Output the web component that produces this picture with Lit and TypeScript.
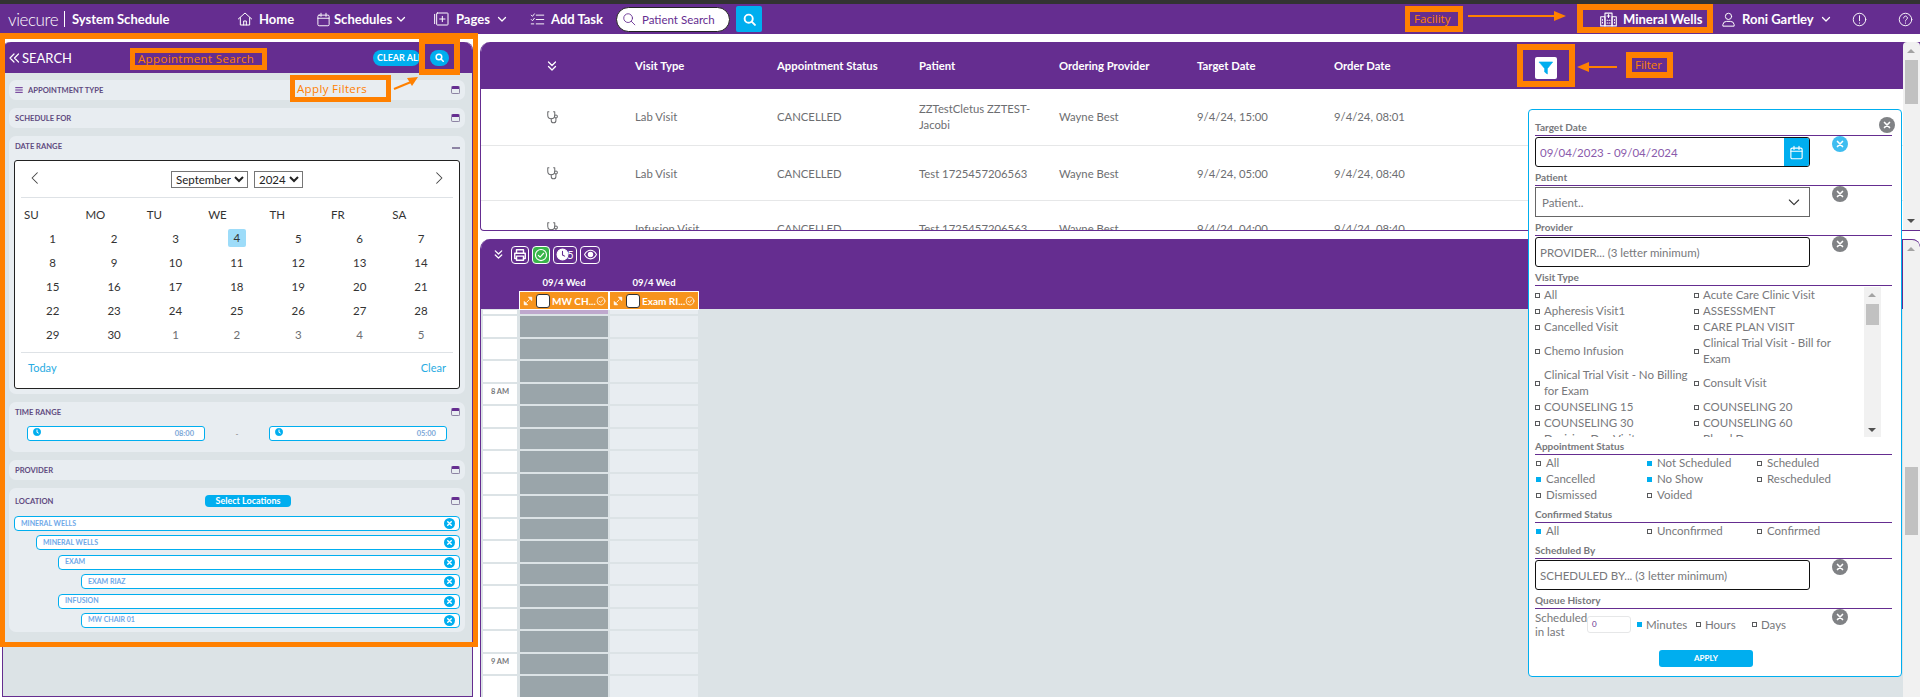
import { LitElement, html, css, svg } from "lit";
import { customElement } from "lit/decorators.js";

// small svg helper, all icons are stroke based on a 24 box
const ico = (size: number, body: unknown, sw = 1.8, color = "currentColor") => html`<svg
  width=${size} height=${size} viewBox="0 0 24 24" fill="none" stroke=${color} stroke-width=${sw}
  stroke-linecap="round" stroke-linejoin="round" style="flex:none;display:block">${body}</svg>`;

const icons = {
  home: svg`<path d="M2 12 12 3l10 9"/><path d="M5 10v11h14V10"/><path d="M10 21v-6h4v6"/>`,
  cal: svg`<rect x="3" y="5" width="18" height="17" rx="2"/><path d="M3 10h18M8 2v5M16 2v5"/>`,
  pages: svg`<rect x="4" y="3" width="17" height="18" rx="1"/><path d="M1 5v14M12.5 8v8M8.5 12h8"/>`,
  task: svg`<path d="M10 5h12M10 12h12M10 19h12M2 5l2 2 3-4M2 12l2 2 3-4M2 19h4"/>`,
  search: svg`<circle cx="10.5" cy="10.5" r="7.5"/><path d="m16 16 6 6"/>`,
  building: svg`<rect x="7" y="3" width="10" height="18"/><rect x="1" y="8" width="6" height="13"/><rect x="17" y="8" width="6" height="13"/><path d="M10 7h4M12 5v4M10 13h1M13 13h1M10 17h1M13 17h1M3.5 12v1M3.5 16v1M20.5 12v1M20.5 16v1"/>`,
  user: svg`<circle cx="12" cy="7" r="5"/><path d="M3 22v-2a6 6 0 0 1 6-5h6a6 6 0 0 1 6 5v2z"/>`,
  alert: svg`<circle cx="12" cy="12" r="10"/><path d="M12 6v8M12 17.5v.5"/>`,
  help: svg`<circle cx="12" cy="12" r="10"/><path d="M9 9.5a3 3 0 1 1 4.5 2.6c-1 .6-1.5 1.2-1.5 2.4M12 17.5v.5"/>`,
  down: svg`<path d="m5 9 7 7 7-7"/>`,
  dblDown: svg`<path d="m5 4 7 7 7-7M5 13l7 7 7-7"/>`,
  dblLeft: svg`<path d="m12 4-8 8 8 8M21 4l-8 8 8 8"/>`,
  left: svg`<path d="m16 3-9 9 9 9"/>`,
  right: svg`<path d="m8 3 9 9-9 9"/>`,
  scope: svg`<path d="M5 3H3v6a6 6 0 0 0 12 0V3h-2"/><path d="M9 15v3a4 4 0 0 0 8 0v-4"/><circle cx="17" cy="11" r="2.5"/>`,
  printer: svg`<path d="M6 9V3h12v6M6 18H3V9h18v9h-3"/><rect x="6" y="14" width="12" height="7"/>`,
  check: svg`<circle cx="12" cy="12" r="9.5"/><path d="m7.5 12.5 3 3 6-6.5"/>`,
  eye: svg`<path d="M1 12s4-8 11-8 11 8 11 8-4 8-11 8S1 12 1 12z"/><circle cx="12" cy="12" r="4" fill="currentColor"/>`,
  expand: svg`<path d="M14 3h7v7zM10 21H3v-7z" fill="currentColor"/><path d="m9 15 6-6"/>`,
  cross: svg`<path d="m6 6 12 12M18 6 6 18"/>`,
};

@customElement("filter-panel")
export class FilterPanel extends LitElement {
  static styles = css`
    :host {
      display: block;
      position: absolute;
      left: 1528px;
      top: 109px;
      width: 374px;
      height: 568px;
      box-sizing: border-box;
      background: #fff;
      border: 1px solid #00aeef;
      border-radius: 4px;
      padding: 10px 9px 0 6px;
      font-family: Lato, sans-serif;
      color: #77787b;
      font-size: 11.5px;
    }
    .label {
      height: 16px;
      box-sizing: border-box;
      border-bottom: 1px solid #652d90;
      font-size: 10px;
      font-weight: 700;
      line-height: 14px;
      color: #77787b;
    }
    .row {
      display: flex;
      align-items: flex-start;
      margin: 1px 0 3px;
    }
    .field {
      width: 275px;
      height: 30px;
      box-sizing: border-box;
      border: 1px solid #111;
      border-radius: 3px;
      display: flex;
      align-items: center;
      padding-left: 4px;
      font-size: 11.5px;
      color: #77787b;
      overflow: hidden;
    }
    .field.date { color: #8a5bab; padding-right: 0; justify-content: space-between; }
    .field.plain { border-color: #666; border-radius: 0; padding: 0 7px 0 6px; justify-content: space-between; }
    .calbtn {
      width: 25px;
      height: 30px;
      background: #00aeef;
      color: #fff;
      display: flex;
      align-items: center;
      justify-content: center;
    }
    .x {
      width: 16px;
      height: 16px;
      border-radius: 50%;
      background: #808285;
      color: #fff;
      margin: -1px 0 0 22px;
      display: flex;
      align-items: center;
      justify-content: center;
      flex: none;
    }
    .x.blue { background: #3ebdf0; }
    .x.top { position: absolute; left: 350px; top: 7px; margin: 0; }
    .visit {
      position: relative;
      height: 150px;
      width: 346px;
      overflow: hidden;
      margin: 1px 0 2px;
    }
    .visit-grid {
      display: grid;
      grid-template-columns: 159px 160px;
      line-height: 16px;
    }
    .sb {
      position: absolute;
      right: 0;
      top: 0;
      bottom: 0;
      width: 17px;
      background: #f1f1f1;
    }
    .sb::before, .sb::after {
      content: "";
      position: absolute;
      left: 4px;
      border-left: 4px solid transparent;
      border-right: 4px solid transparent;
    }
    .sb::before { top: 6px; border-bottom: 4px solid #a3a3a3; }
    .sb::after { bottom: 5px; border-top: 4px solid #505050; }
    .sb i { position: absolute; left: 2px; top: 17px; width: 13px; height: 21px; background: #c1c1c1; }
    .opt {
      display: flex;
      align-items: center;
      gap: 4px;
      min-height: 16px;
    }
    .opt b {
      width: 3px;
      height: 3px;
      border: 1px solid #58595b;
      flex: none;
    }
    .opt b.on { background: #00aeef; border-color: #00aeef; }
    .status {
      display: grid;
      grid-template-columns: 111px 110px 130px;
      line-height: 16px;
      padding-left: 1px;
      margin-bottom: 4px;
    }
    .status .opt { gap: 5px; }
    .queue { width: 275px; display: flex; align-items: center; height: 29px; }
    .queue .txt { width: 52px; line-height: 14px; }
    .queue .num {
      width: 44px;
      height: 17px;
      box-sizing: border-box;
      border: 1px solid #e6e7e8;
      border-radius: 3px;
      font-size: 8px;
      color: #652d90;
      padding: 2px 4px;
      margin-right: 6px;
    }
    .queue .opt.m { width: 59px; }
    .queue .opt.h { width: 56px; }
    .apply {
      width: 94px;
      height: 17px;
      margin: 11px 0 0 124px;
      background: #00aeef;
      color: #fff;
      border-radius: 3px;
      font-size: 8px;
      font-weight: 700;
      text-align: center;
      line-height: 17px;
    }
  `;

  visit = [
    "All", "Acute Care Clinic Visit", "Apheresis Visit1", "ASSESSMENT", "Cancelled Visit", "CARE PLAN VISIT",
    "Chemo Infusion", "Clinical Trial Visit - Bill for Exam", "Clinical Trial Visit - No Billing for Exam",
    "Consult Visit", "COUNSELING 15", "COUNSELING 20", "COUNSELING 30", "COUNSELING 60",
    "Decision Day Visit", "Blood Draw",
  ];
  status: [string, boolean][] = [
    ["All", false], ["Not Scheduled", true], ["Scheduled", false],
    ["Cancelled", true], ["No Show", true], ["Rescheduled", false],
    ["Dismissed", false], ["Voided", false],
  ];

  opt(text: string, on = false, cls = "") {
    return html`<div class="opt ${cls}"><b class=${on ? "on" : ""}></b><span>${text}</span></div>`;
  }

  clear(blue = false) {
    return html`<div class="x ${blue ? "blue" : ""}">${ico(10, icons.cross, 4)}</div>`;
  }

  render() {
    return html`
      <div class="x top">${ico(10, icons.cross, 4)}</div>
      <div class="label">Target Date</div>
      <div class="row">
        <div class="field date"><span>09/04/2023 - 09/04/2024</span><div class="calbtn">${ico(15, icons.cal)}</div></div>
        ${this.clear(true)}
      </div>
      <div class="label">Patient</div>
      <div class="row">
        <div class="field plain"><span>Patient..</span>${ico(16, icons.down, 1.6, "#333")}</div>
        ${this.clear()}
      </div>
      <div class="label">Provider</div>
      <div class="row">
        <div class="field">PROVIDER... (3 letter minimum)</div>
        ${this.clear()}
      </div>
      <div class="label">Visit Type</div>
      <div class="visit">
        <div class="visit-grid">${this.visit.map((v) => this.opt(v))}</div>
        <div class="sb"><i></i></div>
      </div>
      <div class="label">Appointment Status</div>
      <div class="status">${this.status.map(([t, on]) => this.opt(t, on))}</div>
      <div class="label">Confirmed Status</div>
      <div class="status">${this.opt("All", true)}${this.opt("Unconfirmed")}${this.opt("Confirmed")}</div>
      <div class="label">Scheduled By</div>
      <div class="row">
        <div class="field">SCHEDULED BY... (3 letter minimum)</div>
        ${this.clear()}
      </div>
      <div class="label">Queue History</div>
      <div class="row">
        <div class="queue">
          <div class="txt">Scheduled in last</div>
          <div class="num">0</div>
          ${this.opt("Minutes", true, "m")}${this.opt("Hours", false, "h")}${this.opt("Days")}
        </div>
        ${this.clear()}
      </div>
      <div class="apply">APPLY</div>
    `;
  }
}

@customElement("app-root")
export class AppRoot extends LitElement {
  static styles = css`
    :host {
      display: block;
      position: relative;
      width: 1920px;
      height: 697px;
      overflow: hidden;
      background: #fff;
      font-family: Lato, sans-serif;
      --purple: #652d90;
      --blue: #00aeef;
      --bg: #dce3e6;
      --card: #e8edf1;
      --orange: #ff8000;
    }
    .topline { height: 4px; background: #333; }
    nav {
      height: 30px;
      background: var(--purple);
      color: #fff;
      display: flex;
      align-items: center;
      font-size: 13px;
      font-weight: 700;
      white-space: nowrap;
    }
    nav .logo { margin-left: 8px; font-size: 17px; font-weight: 300; letter-spacing: -0.4px; width: 50px; }
    nav .sep { width: 1px; height: 16px; background: #fff; margin: 0 7px 0 6px; }
    nav .title { width: 165px; }
    nav .item { display: flex; align-items: center; gap: 6px; }
    nav .item.tight { gap: 3px; }
    nav .i-home { width: 79px; }
    nav .i-sched { width: 118px; }
    nav .i-pages { width: 96px; }
    nav .i-task { width: 72px; }
    nav .i-well { margin-left: 838px; width: 121px; }
    nav .i-user { width: 131px; }
    nav .i-alert { width: 46px; }
    nav .search {
      width: 114px;
      height: 25px;
      box-sizing: border-box;
      background: #fff;
      border: 1px solid #222;
      border-radius: 13px;
      color: #652d90;
      font-size: 11.5px;
      font-weight: 400;
      display: flex;
      align-items: center;
      gap: 6px;
      padding-left: 5px;
      margin-left: 14px;
    }
    nav .sbtn {
      width: 26px;
      height: 26px;
      background: var(--blue);
      border-radius: 2px;
      margin-left: 6px;
      display: flex;
      align-items: center;
      justify-content: center;
    }
    .content { display: grid; grid-template-columns: 480px 1440px; height: 663px; padding-top: 8px; box-sizing: border-box; }

    /* left search column */
    .panel {
      width: 471px;
      margin-left: 2px;
      box-sizing: border-box;
      height: 655px;
      background: var(--bg);
      border: 1px solid var(--purple);
      border-top: 0;
      border-radius: 8px 8px 0 0;
    }
    .phead {
      height: 31px;
      background: var(--purple);
      border-radius: 8px 8px 0 0;
      color: #fff;
      display: flex;
      align-items: center;
      padding-left: 5px;
      font-size: 13px;
    }
    .phead .s { margin-left: 2px; flex: 1; }
    .clearall {
      width: 47px;
      height: 16px;
      background: var(--blue);
      border-radius: 8px;
      font-size: 9px;
      font-weight: 700;
      line-height: 16px;
      padding-left: 4px;
      box-sizing: border-box;
      white-space: nowrap;
      margin-right: 10px;
    }
    .psearch {
      width: 19px;
      height: 16px;
      background: var(--blue);
      border-radius: 8px;
      margin-right: 23px;
      display: flex;
      align-items: center;
      justify-content: center;
    }
    .sections { padding: 7px 7px 0 6px; display: flex; flex-direction: column; gap: 8px; }
    .sec { background: var(--card); border-radius: 7px; padding: 0 5px 0 6px; }
    .sec-head {
      height: 20px;
      display: flex;
      align-items: center;
      gap: 5px;
      font-size: 7.6px;
      font-weight: 700;
      color: #5f4a80;
    }
    .sec-head .title { flex: 1; }
    .win {
      width: 9px;
      height: 8px;
      box-sizing: border-box;
      border: 1px solid #8d84a4;
      border-top: 3px solid var(--purple);
      border-radius: 2px;
      flex: none;
    }
    .minus { width: 8px; height: 2px; background: #8d84a4; flex: none; margin-top: 4px; }
    .cal {
      height: 229px;
      box-sizing: border-box;
      margin: 4px 0 5px -1px;
      background: #fff;
      border: 1px solid #222;
      border-radius: 3px;
      padding: 0 6px;
      color: #333;
      font-size: 11.5px;
    }
    .cal-top {
      height: 36px;
      border-bottom: 1px solid #dee2e6;
      display: flex;
      align-items: center;
      justify-content: center;
      gap: 6px;
      position: relative;
    }
    .cal-top svg { position: absolute; top: 10px; }
    .cal-top svg:first-child { left: 7px; }
    .cal-top svg:last-child { right: 7px; }
    select {
      height: 17px;
      border: 1px solid #767676;
      border-radius: 0;
      background: #fff;
      font-family: Lato, sans-serif;
      font-size: 11.5px;
      color: #222;
      padding: 0;
    }
    .days {
      display: grid;
      grid-template-columns: repeat(7, 61.4px);
      grid-auto-rows: 24px;
      align-items: center;
      justify-items: center;
      padding: 4px 0 0 1px;
      height: 155px;
      box-sizing: border-box;
      border-bottom: 1px solid #dee2e6;
    }
    .days .wd { justify-self: start; padding-left: 2px; font-size: 11.5px; }
    .days .on { width: 18px; height: 18px; background: #9ddcf9; border-radius: 2px; text-align: center; line-height: 18px; }
    .days .mut { color: #6d6e71; }
    .cal-foot { display: flex; justify-content: space-between; padding: 8px 7px; color: #29abe2; font-size: 11px; }
    .times { display: flex; justify-content: space-between; padding: 4px 13px 11px 12px; align-items: center; font-size: 8px; color: #777; }
    .time {
      width: 178px;
      height: 15px;
      box-sizing: border-box;
      background: #fff;
      border: 1px solid var(--blue);
      border-radius: 3px;
      color: #7ea8d8;
      font-size: 7.5px;
      font-weight: 700;
      display: flex;
      justify-content: space-between;
      padding: 1px 10px 0 5px;
      line-height: 12px;
    }
    .pill {
      width: 86px;
      height: 12px;
      background: var(--blue);
      border-radius: 4px;
      color: #fff;
      text-align: center;
      line-height: 12px;
      font-size: 9px;
      margin-right: 155px;
      flex: none;
    }
    .loc-head { height: 26px; margin: 0 0 2px; }
    .locs { display: flex; flex-direction: column; gap: 4.4px; padding-bottom: 4px; margin-left: -1px; }
    .loc {
      height: 15px;
      box-sizing: border-box;
      background: #fff;
      border: 1px solid var(--blue);
      border-radius: 4px;
      color: #6fa8e8;
      font-size: 7px;
      font-weight: 700;
      display: flex;
      align-items: center;
      justify-content: space-between;
      padding: 0 4px 2px 6px;
    }
    .loc.l1 { margin-left: 22px; }
    .loc.l2 { margin-left: 44px; }
    .loc.l3 { margin-left: 67px; }
    .loc u {
      width: 11px;
      height: 11px;
      border-radius: 50%;
      background: var(--blue);
      color: #fff;
      display: flex;
      align-items: center;
      justify-content: center;
      margin-top: 2px;
    }

    /* table */
    .right { display: flex; flex-direction: column; gap: 8px; min-width: 0; }
    .table {
      height: 189px;
      position: relative;
      overflow: hidden;
      box-sizing: border-box;
      border-left: 1px solid var(--purple);
      border-bottom: 1px solid var(--purple);
      border-radius: 10px 0 0 4px;
      font-size: 11.3px;
      color: #6d6e71;
    }
    .tr {
      display: grid;
      grid-template-columns: 154px 142px 142px 140px 138px 137px 138px 1fr;
      align-items: center;
      box-sizing: border-box;
      border-bottom: 1px solid #e6e7e8;
      padding-right: 18px;
    }
    .tr.h {
      height: 47px;
      background: var(--purple);
      color: #fff;
      font-weight: 700;
      border-bottom: 0;
    }
    .tr.h > :first-child, .tr .st { margin-left: 65px; }
    .tr.r0 { height: 57px; line-height: 16px; }
    .tr.r1 { height: 55px; }
    .tr.r2 { height: 55px; }
    .filter {
      width: 22px;
      height: 22px;
      background: #fff;
      border-radius: 2px;
      margin-left: 63px;
      margin-top: 4px;
      display: flex;
      align-items: center;
      justify-content: center;
    }
    .scroll {
      position: absolute;
      right: 0;
      top: 0;
      bottom: 0;
      width: 17px;
      background: #f1f1f1;
      border-radius: 4px 4px 0 0;
    }
    .scroll::before, .scroll::after {
      content: "";
      position: absolute;
      left: 4px;
      border-left: 4px solid transparent;
      border-right: 4px solid transparent;
    }
    .scroll::before { top: 7px; border-bottom: 4px solid #a3a3a3; }
    .scroll::after { bottom: 7px; border-top: 4px solid #505050; }
    .scroll i { position: absolute; left: 2px; width: 13px; background: #c1c1c1; }
    .table .scroll i { top: 18px; height: 44px; }

    /* schedule */
    .sched {
      flex: 1;
      min-height: 0;
      position: relative;
      overflow: hidden;
      background: var(--bg);
      border-left: 1px solid var(--purple);
      border-radius: 10px 8px 0 0;
      box-sizing: border-box;
    }
    .sched .scroll { border-top: 1px solid var(--purple); border-radius: 0 8px 0 0; }
    .sched .scroll::after { display: none; }
    .sched .scroll i { top: 227px; height: 68px; }
    .shead {
      height: 70px;
      background: var(--purple);
      color: #fff;
      padding-left: 38px;
      box-sizing: border-box;
    }
    .tools { display: flex; align-items: center; gap: 3px; height: 27px; padding-top: 4px; box-sizing: border-box; margin-left: -26px; }
    .tools .dbl { margin-right: 4px; }
    .tool {
      height: 18px;
      min-width: 18px;
      box-sizing: border-box;
      border: 1px solid #fff;
      border-radius: 4px;
      display: flex;
      align-items: center;
      justify-content: center;
      font-size: 11px;
      padding: 0 1px;
    }
    .tool.ok { background: #39b54a; }
    .tool.clock { width: 24px; }
    .tool.clock span { margin-left: -2px; }
    .tool.see { width: 20px; }
    .dates { display: flex; height: 25px; align-items: flex-end; padding-bottom: 3px; box-sizing: border-box; }
    .dates span { width: 90px; text-align: center; font-size: 9.5px; font-weight: 700; }
    .cols { display: flex; }
    .col {
      width: 90px;
      height: 19px;
      box-sizing: border-box;
      background: #f7941d;
      border: 1px solid #fff;
      display: flex;
      align-items: center;
      padding: 0 3px;
      font-size: 10px;
      font-weight: 700;
      color: #fff;
      white-space: nowrap;
    }
    .col .box {
      width: 14px;
      height: 14px;
      box-sizing: border-box;
      background: #fff;
      border: 1px solid #333;
      border-radius: 3px;
      margin: 0 2px 0 3px;
      flex: none;
    }
    .col .name { flex: 1; }
    .grid {
      display: grid;
      grid-template-columns: 34px 88px 88px;
      column-gap: 2.5px;
      grid-template-rows: 4px;
      grid-auto-rows: 20.5px;
      row-gap: 2px;
      padding: 1px 0 0 2px;
      width: max-content;
    }
    .tm { background: #fff; font-size: 7.5px; font-weight: 700; color: #77787b; text-align: center; padding-top: 3px; box-sizing: border-box; overflow: hidden; }
    .a { background: #9aa5aa; }
    .a.first { background: #bfa8cd; }
    .b { background: var(--card); }

    /* orange call-outs drawn over the screenshot */
    .mark {
      position: absolute;
      box-sizing: border-box;
      border: 5px solid var(--orange);
      font-family: "Open Sans", sans-serif;
      font-size: 11.5px;
      color: var(--orange);
      white-space: nowrap;
    }
    .m-frame { left: 0; top: 33px; width: 478px; height: 614px; border-top-width: 6px; }
    .m-appt { left: 130px; top: 48px; width: 137px; height: 22px; line-height: 12px; padding-left: 3px; letter-spacing: .35px; background: var(--purple); }
    .m-apply { left: 290px; top: 75px; width: 101px; height: 27px; line-height: 17px; padding-left: 2px; letter-spacing: .35px; background: var(--card); }
    .m-go { left: 419px; top: 38px; width: 41px; height: 37px; border-width: 6px; }
    .m-fac { left: 1405px; top: 6px; width: 58px; height: 26px; line-height: 14px; padding-left: 4px; border-width: 6px 5px; background: var(--purple); }
    .m-well { left: 1577px; top: 4px; width: 136px; height: 29px; border-width: 6px; }
    .m-filt { left: 1517px; top: 44px; width: 58px; height: 43px; border-width: 6px; }
    .m-ftxt { left: 1626px; top: 52px; width: 47px; height: 26px; line-height: 14px; padding-left: 3px; border-width: 6px; background: var(--purple); }
    .arrow { position: absolute; overflow: visible; }
    .a1 { left: 392px; top: 74px; }
    .a2 { left: 1468px; top: 10px; }
    .a3 { left: 1576px; top: 60px; }
  `;

  monthDays = Array.from({ length: 30 }, (_, i) => i + 1);
  rows = [
    ["Lab Visit", "CANCELLED", "ZZTestCletus ZZTEST-Jacobi", "Wayne Best", "9/4/24, 15:00", "9/4/24, 08:01"],
    ["Lab Visit", "CANCELLED", "Test 1725457206563", "Wayne Best", "9/4/24, 05:00", "9/4/24, 08:40"],
    ["Infusion Visit", "CANCELLED", "Test 1725457206563", "Wayne Best", "9/4/24, 04:00", "9/4/24, 08:40"],
  ];
  locs: [string, string][] = [
    ["MINERAL WELLS", ""], ["MINERAL WELLS", "l1"], ["EXAM", "l2"], ["EXAM RIAZ", "l3"], ["INFUSION", "l2"], ["MW CHAIR 01", "l3"],
  ];

  section(title: string, extra?: unknown) {
    return html`<div class="sec"><div class="sec-head"><span class="title">${title}</span><span class="win"></span></div>${extra ?? ""}</div>`;
  }

  renderNav() {
    return html`<nav>
      <span class="logo">viecure</span><span class="sep"></span><span class="title">System Schedule</span>
      <div class="item i-home">${ico(16, icons.home, 1.5)}Home</div>
      <div class="item tight i-sched">${ico(15, icons.cal, 1.5)}Schedules ${ico(12, icons.down, 2.5)}</div>
      <div class="item i-pages">${ico(16, icons.pages, 1.5)}Pages ${ico(12, icons.down, 2.5)}</div>
      <div class="item i-task">${ico(15, icons.task, 1.5)}Add Task</div>
      <div class="search">${ico(14, icons.search, 1.5, "#652d90")}Patient Search</div>
      <div class="sbtn">${ico(13, icons.search, 3.5)}</div>
      <div class="item i-well">${ico(17, icons.building, 1.5)}Mineral Wells</div>
      <div class="item i-user">${ico(15, icons.user, 1.6)}Roni Gartley ${ico(12, icons.down, 2.5)}</div>
      <div class="i-alert">${ico(15, icons.alert, 1.5)}</div>
      ${ico(15, icons.help, 1.5)}
    </nav>`;
  }

  renderCalendar() {
    return html`<div class="cal">
      <div class="cal-top">
        ${ico(14, icons.left, 1.8, "#444")}
        <select class="mon"><option>September</option></select>
        <select class="yr"><option>2024</option></select>
        ${ico(14, icons.right, 1.8, "#444")}
      </div>
      <div class="days">
        ${["SU", "MO", "TU", "WE", "TH", "FR", "SA"].map((d) => html`<span class="wd">${d}</span>`)}
        ${this.monthDays.map((d) => html`<span class=${d === 4 ? "on" : ""}>${d}</span>`)}
        ${[1, 2, 3, 4, 5].map((d) => html`<span class="mut">${d}</span>`)}
      </div>
      <div class="cal-foot"><span>Today</span><span>Clear</span></div>
    </div>`;
  }

  clock() {
    return ico(8, svg`<circle cx="12" cy="12" r="11" fill="#00aeef" stroke="#00aeef"/><path d="M12 6v7l4 2" stroke="#fff" stroke-width="3"/>`);
  }

  renderLeft() {
    return html`<div class="panel">
      <div class="phead">${ico(12, icons.dblLeft, 2.4)}<span class="s">SEARCH</span>
        <div class="clearall">CLEAR ALL</div>
        <div class="psearch">${ico(9, icons.search, 4)}</div>
      </div>
      <div class="sections">
        <div class="sec"><div class="sec-head">
          ${ico(8, svg`<path d="M2 5h20M2 12h20M2 19h20"/>`, 3, "#652d90")}<span class="title">APPOINTMENT TYPE</span><span class="win"></span>
        </div></div>
        ${this.section("SCHEDULE FOR")}
        <div class="sec"><div class="sec-head"><span class="title">DATE RANGE</span><span class="minus"></span></div>${this.renderCalendar()}</div>
        ${this.section("TIME RANGE", html`<div class="times">
          <div class="time">${this.clock()}08:00</div>-<div class="time">${this.clock()}05:00</div>
        </div>`)}
        ${this.section("PROVIDER")}
        <div class="sec">
          <div class="sec-head loc-head"><span class="title">LOCATION</span><span class="pill">Select Locations</span><span class="win"></span></div>
          <div class="locs">
            ${this.locs.map(([n, c]) => html`<div class="loc ${c}">${n}<u>${ico(7, icons.cross, 5)}</u></div>`)}
          </div>
        </div>
      </div>
    </div>`;
  }

  renderTable() {
    return html`<div class="table">
      <div class="tr h">
        ${ico(12, icons.dblDown, 2.6)}
        <span>Visit Type</span><span>Appointment Status</span><span>Patient</span>
        <span>Ordering Provider</span><span>Target Date</span><span>Order Date</span>
        <div class="filter">${ico(16, svg`<path d="M2 3h20l-8 10v8l-4-3v-5z" fill="#00aeef"/>`, 1, "#00aeef")}</div>
      </div>
      ${this.rows.map((r, i) => html`<div class="tr r${i}">
        <span class="st">${ico(14, icons.scope, 1.8)}</span>
        ${r.map((c) => html`<span>${c}</span>`)}
      </div>`)}
      <div class="scroll"><i></i></div>
    </div>`;
  }

  renderSchedule() {
    const cells = [];
    for (let i = 0; i < 18; i++) {
      // 5 minute slots, twelve an hour
      const label = i === 4 ? "8 AM" : i === 16 ? "9 AM" : "";
      cells.push(html`<div class="tm">${label}</div><div class="a ${i === 0 ? "first" : ""}"></div><div class="b"></div>`);
    }
    return html`<div class="sched">
      <div class="shead">
        <div class="tools">
          <span class="dbl">${ico(11, icons.dblDown, 2.8)}</span>
          <div class="tool">${ico(14, icons.printer, 2.4)}</div>
          <div class="tool ok">${ico(14, icons.check, 2)}</div>
          <div class="tool clock">${ico(13, svg`<circle cx="12" cy="12" r="10" fill="#fff"/><path d="M12 6v7l4 2" stroke="#652d90"/>`, 2)}<span>5</span></div>
          <div class="tool see">${ico(13, icons.eye, 2)}</div>
        </div>
        <div class="dates"><span>09/4 Wed</span><span>09/4 Wed</span></div>
        <div class="cols">
          <div class="col">${ico(10, icons.expand, 2)}<span class="box"></span><span class="name">MW CH...</span>${ico(10, icons.check, 1.8)}</div>
          <div class="col">${ico(10, icons.expand, 2)}<span class="box"></span><span class="name">Exam RI...</span>${ico(10, icons.check, 1.8)}</div>
        </div>
      </div>
      <div class="grid">${cells}</div>
      <div class="scroll"><i></i></div>
    </div>`;
  }

  render() {
    return html`
      <div class="topline"></div>
      ${this.renderNav()}
      <div class="content">
        ${this.renderLeft()}
        <div class="right">${this.renderTable()}${this.renderSchedule()}</div>
      </div>
      <filter-panel></filter-panel>

      <div class="mark m-frame"></div>
      <div class="mark m-appt">Appointment Search</div>
      <div class="mark m-apply">Apply Filters</div>
      <div class="mark m-go"></div>
      <div class="mark m-fac">Facility</div>
      <div class="mark m-well"></div>
      <div class="mark m-filt"></div>
      <div class="mark m-ftxt">Filter</div>
      <svg class="arrow a1" width="28" height="18"><path d="M2 15 L19 8" stroke="#ff8000" stroke-width="2"/><path d="M26 3 L15 4 L20 12z" fill="#ff8000"/></svg>
      <svg class="arrow a2" width="100" height="12"><path d="M0 6H88" stroke="#ff8000" stroke-width="2"/><path d="M98 6 L86 1V11z" fill="#ff8000"/></svg>
      <svg class="arrow a3" width="42" height="14"><path d="M12 7H41" stroke="#ff8000" stroke-width="2"/><path d="M1 7 L13 2V12z" fill="#ff8000"/></svg>
    `;
  }
}
